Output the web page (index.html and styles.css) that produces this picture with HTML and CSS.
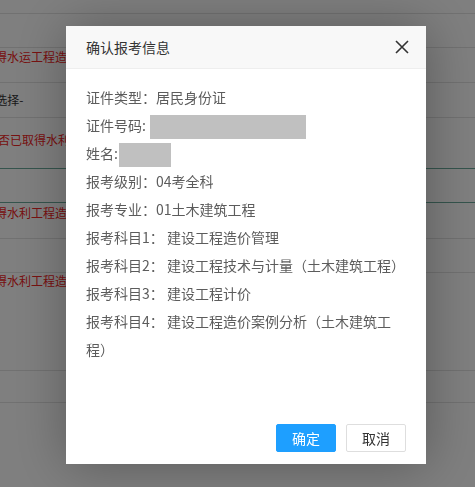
FILE: index.html
```html
<!DOCTYPE html>
<html lang="zh-CN">
<head>
    <meta charset="UTF-8">
    <meta name="viewport" content="width=device-width, initial-scale=1.0">
    <title>确认报考信息</title>
    <link rel="stylesheet" href="styles.css">
</head>
<body>
    <!-- Formulaire d'inscription en arrière-plan -->
    <div class="sheet">
        <div class="row row-1"></div>
        <div class="row row-2"></div>
        <div class="row row-3"><span class="cell cell-red cut-3">得水运工程造</span></div>
        <div class="row row-4"><span class="cell cut-4">-选择-</span></div>
        <div class="row row-5 row-green"><span class="cell cell-red cut-5">否已取得水利</span></div>
        <div class="row row-6 row-green"></div>
        <div class="row row-7"><span class="cell cell-red cut-3">得水利工程造</span></div>
        <div class="row row-8"></div>
        <div class="row row-9"><span class="cell cell-red cut-3">得水利工程造</span></div>
        <div class="row row-10"></div>
        <div class="row row-11"></div>
    </div>

    <div class="shade"></div>

    <div class="layer">
        <div class="layer-title">
            <span>确认报考信息</span>
            <span class="layer-close">
                <svg width="14" height="14" viewBox="0 0 14 14">
                    <path d="M1 1 L13 13 M13 1 L1 13" stroke="#333" stroke-width="1.6" fill="none"/>
                </svg>
            </span>
        </div>
        <div class="layer-content">
            <div class="info-line">证件类型：居民身份证</div>
            <div class="info-line">证件号码:<span class="masked masked-id"></span></div>
            <div class="info-line">姓名:<span class="masked masked-name"></span></div>
            <div class="info-line">报考级别：04考全科</div>
            <div class="info-line">报考专业：01土木建筑工程</div>
            <div class="info-line">报考科目1： 建设工程造价管理</div>
            <div class="info-line">报考科目2： 建设工程技术与计量（土木建筑工程）</div>
            <div class="info-line">报考科目3： 建设工程计价</div>
            <div class="info-line">报考科目4： 建设工程造价案例分析（土木建筑工程）</div>
        </div>
        <div class="layer-btn">
            <a class="btn btn-ok">确定</a>
            <a class="btn btn-cancel">取消</a>
        </div>
    </div>
</body>
</html>
```

FILE: styles.css
```css
:root {
    --color-white: #FFFFFF;
    --color-blue: #1E9FFF;
    --color-line: #e2e2e2;
    --color-green: #6aa99a;
    --color-red: #f02424;
    --color-text: #333333;
    --color-info: #5c5c5c;
    --color-mask: #c0c0c0;
}

body {
    margin: 0;
    height: 487px;
    overflow: hidden;
    font-family: "Noto Sans CJK SC", "Noto Sans", sans-serif;
    background-color: var(--color-white);
}

/* Tableau en arrière-plan */
.sheet {
    width: 100%;
}

.row {
    box-sizing: border-box;
    border-bottom: 1px solid var(--color-line);
    font-size: 12px;
    line-height: 16px;
    white-space: nowrap;
    overflow: hidden;
}

.row-green {
    border-bottom-color: var(--color-green);
}

.row-1 { height: 14px; }
.row-2 { height: 34px; }
.row-3 { height: 35px; padding-top: 1px; }
.row-4 { height: 35px; padding-top: 9px; }
.row-5 { height: 51px; padding-top: 14px; }
.row-6 { height: 34px; }
.row-7 { height: 36px; padding-top: 2px; }
.row-8 { height: 34px; }
.row-9 { height: 98px; }
.row-10 { height: 32px; }
.row-11 { height: 90px; border-bottom: none; }

.cell {
    display: block;
    color: var(--color-text);
}

.cell-red {
    color: var(--color-red);
}

.cut-3 { margin-left: -5px; }
.cut-4 { margin-left: -9px; }
.cut-5 { margin-left: -2px; }

.shade {
    position: fixed;
    inset: 0;
    background-color: rgba(0, 0, 0, 0.5);
}

/* Fenêtre de confirmation */
.layer {
    position: fixed;
    left: 66px;
    top: 26px;
    width: 360px;
    height: 438px;
    display: flex;
    flex-direction: column;
    background-color: var(--color-white);
    box-shadow: 1px 1px 50px rgba(0, 0, 0, 0.3);
}

.layer-title {
    height: 42px;
    display: flex;
    align-items: center;
    justify-content: space-between;
    padding: 0 17px 0 20px;
    border-bottom: 1px solid #eeeeee;
    background-color: #F8F8F8;
    font-size: 14px;
    color: var(--color-text);
}

.layer-close {
    display: flex;
    width: 14px;
    height: 14px;
}

.layer-content {
    padding: 14px 20px 0;
    font-size: 14px;
    line-height: 28px;
    color: var(--color-info);
}

.masked {
    display: inline-block;
    height: 24px;
    vertical-align: middle;
    background-color: var(--color-mask);
}

.masked-id {
    width: 156px;
    margin-left: 4px;
}

.masked-name {
    width: 52px;
    margin-left: 1px;
}

.layer-btn {
    margin-top: auto;
    display: flex;
    justify-content: flex-end;
    gap: 10px;
    padding: 0 20px 12px;
}

.btn {
    box-sizing: border-box;
    height: 28px;
    padding: 0 15px;
    border: 1px solid #dedede;
    border-radius: 2px;
    font-size: 14px;
    line-height: 26px;
    color: var(--color-text);
    background-color: var(--color-white);
    cursor: pointer;
}

.btn-ok {
    border-color: var(--color-blue);
    background-color: var(--color-blue);
    color: var(--color-white);
}
```
